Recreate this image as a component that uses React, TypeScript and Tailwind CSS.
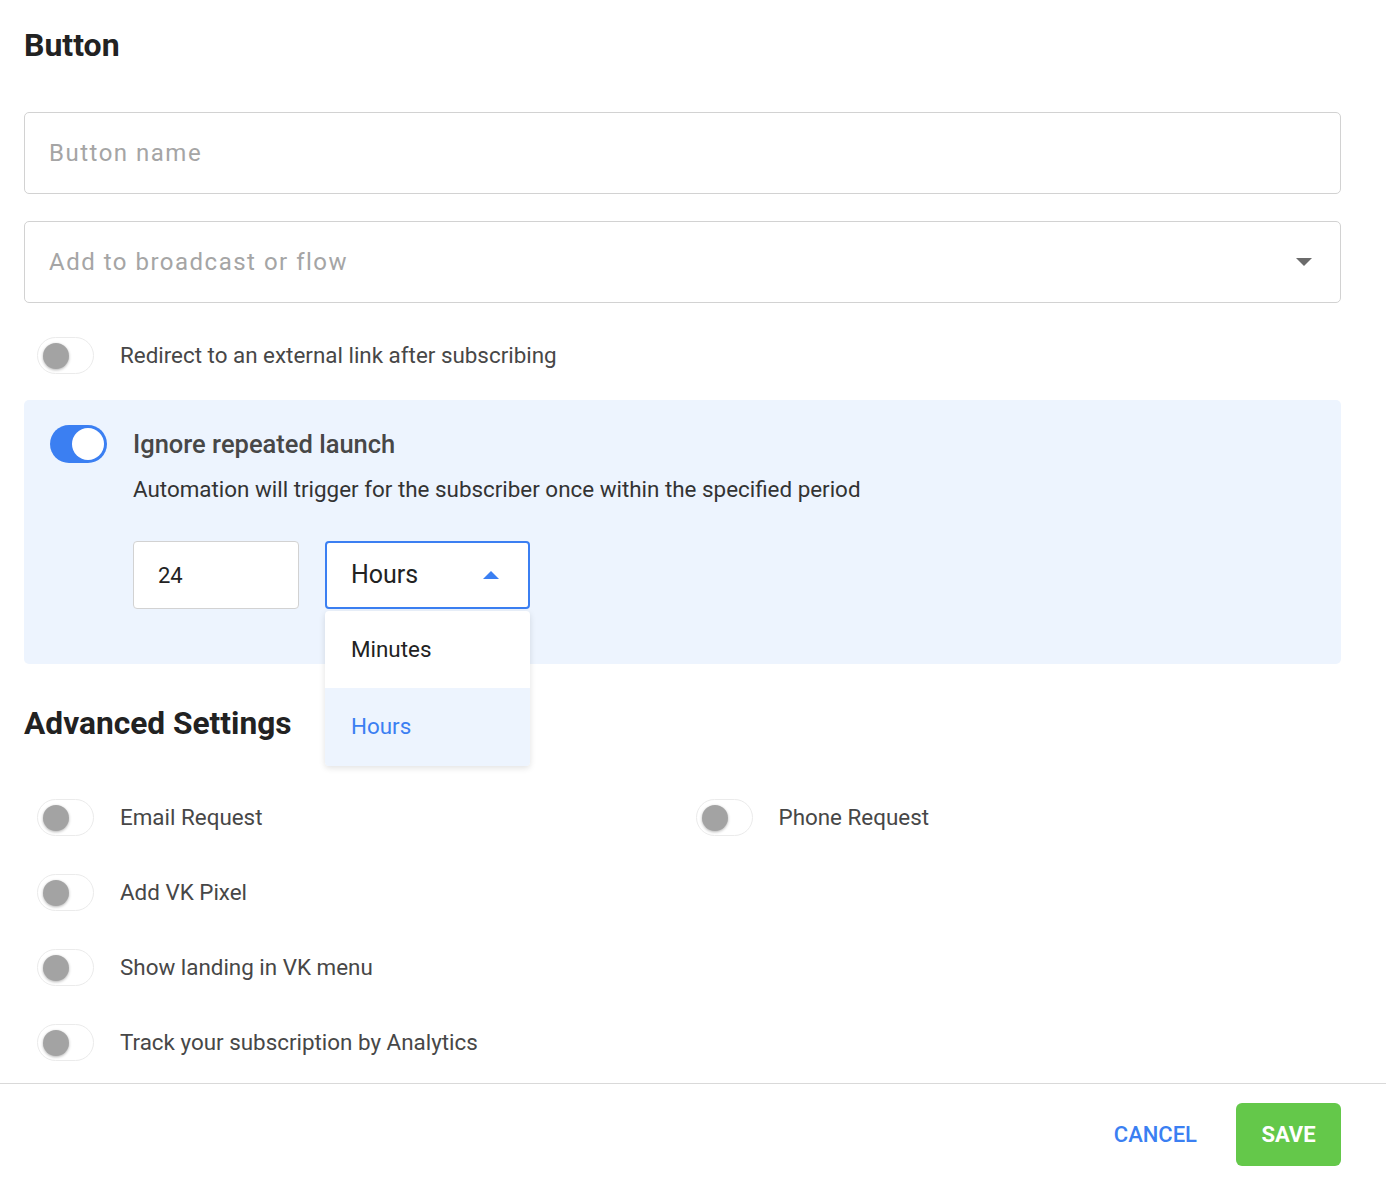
function Toggle({ on = false }: { on?: boolean }) {
  if (on) {
    return (
      <div className="w-[57px] h-[38px] rounded-full bg-[#3b7ff2] flex items-center justify-end pr-[3px] shrink-0">
        <div className="w-[32px] h-[32px] rounded-full bg-white" />
      </div>
    );
  }
  return (
    <div className="w-[57px] h-[37px] rounded-full bg-white border border-[#ebebeb] flex items-center pl-[5px] shrink-0">
      <div className="w-[26px] h-[26px] rounded-full bg-[#a3a3a3] shadow-[0_1px_3px_rgba(0,0,0,0.3)]" />
    </div>
  );
}

function ToggleRow({ label }: { label: string }) {
  return (
    <div className="flex items-center h-[37px] pl-[13px]">
      <Toggle />
      <span className="ml-[26px] text-[22.4px] text-[#474747]">{label}</span>
    </div>
  );
}

export default function App() {
  return (
    <div className="min-h-[1198px] bg-white font-['Roboto',sans-serif] text-[#222]">
      <div className="pl-[24px] pr-[45px] pt-[24px]">
        <h1 className="text-[32px] font-bold leading-[42px] text-[#222]">Button</h1>

        <div className="mt-[46px] h-[82px] rounded-[5px] border border-[#d2d2d2] flex items-center px-[24px]">
          <span className="text-[24px] text-[#a5a5a5] tracking-[1.5px]">Button name</span>
        </div>

        <div className="mt-[27px] h-[82px] rounded-[5px] border border-[#d2d2d2] flex items-center justify-between pl-[24px] pr-[28px]">
          <span className="text-[24px] text-[#a5a5a5] tracking-[1.5px]">Add to broadcast or flow</span>
          <svg width="16" height="8" viewBox="0 0 16 8">
            <path d="M0 0h16L8 8z" fill="#6b6b6b" />
          </svg>
        </div>

        <div className="mt-[34px]">
          <ToggleRow label="Redirect to an external link after subscribing" />
        </div>

        <div className="mt-[26px] rounded-[5px] bg-[#edf4fe] pt-[25px] pb-[55px] pl-[26px] flex gap-[26px]">
          <Toggle on />
          <div className="flex flex-col">
            <div className="h-[38px] flex items-center text-[25.5px] font-medium text-[#474747]">
              Ignore repeated launch
            </div>
            <div className="mt-[13px] leading-[26px] text-[22.4px] text-[#333]">
              Automation will trigger for the subscriber once within the specified period
            </div>
            <div className="mt-[39px] flex gap-[26px]">
              <div className="w-[166px] h-[68px] rounded-[4px] bg-white border border-[#d2d2d2] flex items-center px-[24px] text-[22px] text-[#222]">
                24
              </div>
              <div className="relative">
                <div className="w-[205px] h-[68px] rounded-[4px] bg-white border-2 border-[#3b7ff2] flex items-center justify-between pl-[24px] pr-[29px]">
                  <span className="text-[25px] text-[#222]">Hours</span>
                  <svg width="16" height="8" viewBox="0 0 16 8">
                    <path d="M0 8h16L8 0z" fill="#3b7ff2" />
                  </svg>
                </div>
                <div className="absolute left-0 top-[70px] w-[205px] bg-white rounded-[4px] shadow-[0_2px_6px_rgba(0,0,0,0.12)] overflow-hidden z-10">
                  <div className="h-[77px] flex items-center pl-[26px] text-[22.4px] text-[#222]">Minutes</div>
                  <div className="h-[78px] flex items-center pl-[26px] text-[22.4px] text-[#3b7ff2] bg-[#edf4fe]">Hours</div>
                </div>
              </div>
            </div>
          </div>
        </div>

        <h2 className="mt-[39px] text-[31.7px] font-bold leading-[42px] text-[#222]">Advanced Settings</h2>

        <div className="mt-[54px] grid grid-cols-2 gap-y-[38px]">
          <ToggleRow label="Email Request" />
          <ToggleRow label="Phone Request" />
          <ToggleRow label="Add VK Pixel" />
          <div />
          <ToggleRow label="Show landing in VK menu" />
          <div />
          <ToggleRow label="Track your subscription by Analytics" />
        </div>
      </div>

      <div className="mt-[22px] border-t border-[#d9d9d9] pr-[45px] pt-[19px] flex justify-end items-center">
        <button className="text-[22px] font-medium text-[#3b7ff2] px-[16px] mr-[23px]">CANCEL</button>
        <button className="w-[105px] h-[63px] rounded-[6px] bg-[#64c84a] text-white text-[22px] font-bold">SAVE</button>
      </div>
    </div>
  );
}
